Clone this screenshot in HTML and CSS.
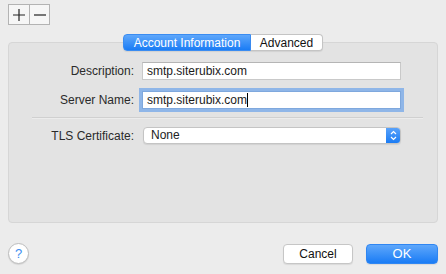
FILE: index.html
```html
<!DOCTYPE html>
<html>
<head>
<meta charset="utf-8">
<link rel="stylesheet" href="styles.css">
</head>
<body>
<div class="window">
  <div class="toolbar">
    <div class="seg">
      <button class="seg-btn"><svg width="14" height="14" viewBox="0 0 14 14"><path d="M7 1v12M1 7h12" stroke="#222" stroke-width="1.2"/></svg></button>
      <button class="seg-btn"><svg width="14" height="14" viewBox="0 0 14 14"><path d="M1 7h12" stroke="#222" stroke-width="1.2"/></svg></button>
    </div>
  </div>
  <div class="panel">
    <div class="tabs">
      <div class="tab active">Account Information</div>
      <div class="tab">Advanced</div>
    </div>
    <div class="form">
      <label class="lbl">Description:</label>
      <div class="field">smtp.siterubix.com</div>
      <label class="lbl">Server Name:</label>
      <div class="field focus">smtp.siterubix.com<span class="caret"></span></div>
    </div>
    <div class="sep"></div>
    <div class="form form2">
      <label class="lbl">TLS Certificate:</label>
      <div class="select">
        <span class="sel-text">None</span>
        <span class="sel-arrow"><svg width="7" height="11" viewBox="0 0 7 11"><path d="M1 4l2.5-2.5L6 4M1 7l2.5 2.5L6 7" fill="none" stroke="#fff" stroke-width="1.2"/></svg></span>
      </div>
    </div>
  </div>
  <div class="footer">
    <button class="help">?</button>
    <div class="actions">
      <button class="btn">Cancel</button>
      <button class="btn primary">OK</button>
    </div>
  </div>
</div>
</body>
</html>
```
FILE: styles.css
```css
* { box-sizing: border-box; }
html, body { margin: 0; padding: 0; }
body {
  width: 446px;
  height: 274px;
  background: #ececec;
  font-family: "Liberation Sans", Arial, sans-serif;
  font-size: 12px;
  color: #222;
  overflow: hidden;
}
.window { display: flex; flex-direction: column; height: 274px; }
.toolbar { padding: 4px 8px 0; height: 42px; }
.seg {
  display: inline-flex;
  border: 1px solid #b3b3b3;
  background: #f6f6f6;
  height: 21px;
}
.seg-btn {
  width: 20px;
  height: 19px;
  padding: 0;
  margin: 0;
  border: 0;
  background: transparent;
  display: flex;
  align-items: center;
  justify-content: center;
}
.seg-btn + .seg-btn { border-left: 1px solid #b3b3b3; }
.panel {
  margin: 0 8px;
  height: 181px;
  background: #e3e3e3;
  border: 1px solid #d6d6d6;
  border-radius: 4px;
}
.tabs {
  display: flex;
  justify-content: center;
  margin-top: -9px;
}
.tab {
  width: 72px;
  height: 17px;
  line-height: 16px;
  text-align: center;
  background: #fff;
  border: 1px solid #c4c4c4;
  border-left: 0;
  border-radius: 0 4px 4px 0;
  font-size: 12px;
  color: #111;
  box-shadow: 0 1px 1px rgba(0,0,0,0.08);
}
.tab.active {
  width: 128px;
  color: #fff;
  background: linear-gradient(#5ea7fb, #1a7cf5);
  border: 1px solid #3a8cf1;
  border-radius: 4px 0 0 4px;
}
.form {
  display: grid;
  grid-template-columns: 125px 259px;
  column-gap: 8px;
  row-gap: 11px;
  align-items: center;
  margin-top: 11px;
}
.lbl { text-align: right; color: #2a2a2a; }
.field {
  height: 18px;
  line-height: 17px;
  padding-left: 4px;
  background: #fff;
  border: 1px solid #c9c9c9;
  border-top-color: #b5b5b5;
  color: #1a1a1a;
}
.field.focus {
  box-shadow: 0 0 0 3px #8fb6e8;
  border-color: #7fa8dd;
}
.caret {
  display: inline-block;
  width: 1px;
  height: 14px;
  background: #000;
  vertical-align: -3px;
}
.sep {
  height: 1px;
  background: #d0d0d0;
  margin: 8px 14px 0 23px;
  box-shadow: 0 1px 0 #ececec;
}
.form2 { margin-top: 9px; }
.select {
  height: 17px;
  display: flex;
  align-items: stretch;
  background: #fff;
  border: 1px solid #c4c4c4;
  border-radius: 4px;
  margin-left: 1px;
  overflow: hidden;
  box-shadow: 0 1px 1px rgba(0,0,0,0.08);
}
.sel-text { flex: 1; padding-left: 7px; line-height: 15px; }
.sel-arrow {
  width: 14px;
  background: linear-gradient(#59a2fa, #1b7cf4);
  display: flex;
  align-items: center;
  justify-content: center;
}
.footer {
  display: flex;
  justify-content: space-between;
  align-items: center;
  padding: 0 8px;
  margin-top: 20px;
}
.help {
  width: 21px;
  height: 21px;
  border-radius: 50%;
  border: 1px solid #bdbdbd;
  background: #fff;
  color: #3d8ef0;
  font-family: "Liberation Sans", Arial, sans-serif;
  font-size: 13px;
  padding: 0;
  box-shadow: 0 1px 1px rgba(0,0,0,0.1);
}
.actions { display: flex; gap: 13px; }
.btn {
  height: 20px;
  width: 70px;
  font-family: "Liberation Sans", Arial, sans-serif;
  font-size: 12px;
  background: #fff;
  border: 1px solid #c6c6c6;
  border-radius: 4px;
  color: #111;
  padding: 0;
  box-shadow: 0 1px 1px rgba(0,0,0,0.08);
}
.btn.primary {
  width: 72px;
  color: #fff;
  font-size: 13px;
  background: linear-gradient(#5ea7fb, #1a7cf5);
  border-color: #2f86f2;
}
```
